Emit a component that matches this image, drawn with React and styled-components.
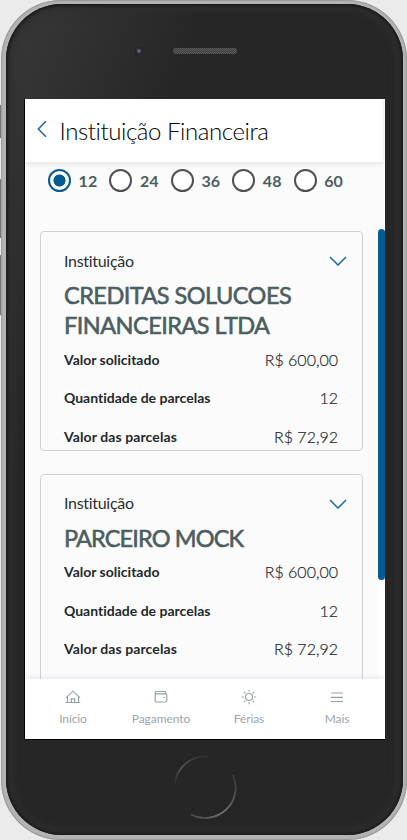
import React from "react";
import styled, { createGlobalStyle, css } from "styled-components";

const Global = createGlobalStyle`
  * { box-sizing: border-box; }
  body { margin: 0; background: #ebebeb; font-family: Lato, "Liberation Sans", sans-serif; font-variant-ligatures: none; }
  h1, h2, p, dl, dt, dd { margin: 0; font-weight: inherit; }
`;

const Stage = styled.div`
  position: relative;
  width: 407px;
  height: 840px;
  overflow: hidden;
  padding-left: 1px;
  background: #ebebeb;
`;

const SideButton = styled.i`
  position: absolute;
  left: 0;
  top: ${(p) => p.$top}px;
  width: 2px;
  height: ${(p) => p.$height}px;
  background: #777;
`;

const Phone = styled.div`
  position: relative;
  width: 406px;
  height: 840px;
  padding: 4px 4px 5px 5px;
  border-radius: 60px;
  background: #b3b3b3;
  box-shadow: inset 0 0 1px 1px #999;
`;

const Bezel = styled.div`
  width: 397px;
  height: 831px;
  border-radius: 56px;
  background: linear-gradient(112deg, #383838 0, #303030 90px, #262626 190px);
  box-shadow: inset 0 0 3px 2px #1b1b1b, inset 0 0 9px 6px #303030;
  display: flex;
  flex-direction: column;
`;

const Top = styled.div`
  height: 95px;
  flex: none;
  display: flex;
  align-items: center;
  padding: 0 0 1px 129px;
`;

const Camera = styled.i`
  width: 8px;
  height: 8px;
  border-radius: 50%;
  background: radial-gradient(circle, #66666e 0 1px, #3b3b44 2px, #1c1b23 4px);
`;

const Speaker = styled.i`
  width: 64px;
  height: 6px;
  margin-left: 30px;
  border-radius: 3px;
  background: repeating-conic-gradient(#5c5c5c 0 25%, #3c3c3c 0 50%) 0 0 / 2px 2px;
`;

const Screen = styled.main`
  width: 361px;
  height: 641px;
  flex: none;
  margin-left: 18px;
  border-left: 1px solid #000;
  border-bottom: 1px solid #000;
  background: #fbfbfb;
  display: flex;
  flex-direction: column;
  overflow: hidden;
`;

const Header = styled.header`
  position: relative;
  z-index: 1;
  height: 64px;
  flex: none;
  margin-right: 2px;
  padding-left: 12px;
  display: flex;
  align-items: center;
  background: #fff;
  border-bottom: 1px solid #eee;
  box-shadow: 0 1px 4px rgba(0, 0, 0, 0.1);
`;

const BackIcon = styled.svg`
  width: 10px;
  height: 18px;
  margin-bottom: 4px;
  fill: none;
  stroke: #17699f;
  stroke-width: 1.5;
`;

const Title = styled.h1`
  margin-left: 12.5px;
  font-size: 24px;
  line-height: 32px;
  font-weight: 300;
  letter-spacing: -0.42px;
  color: #000;
  white-space: nowrap;
`;

const Body = styled.div`
  flex: 1;
  min-height: 0;
  display: flex;
  overflow: hidden;
`;

const Content = styled.div`
  flex: 1;
  min-width: 0;
  padding-left: 15px;
`;

const Options = styled.div`
  display: flex;
  height: 68px;
  padding: 5px 0 0 8px;
`;

const Option = styled.label`
  width: 61.4px;
  height: 25px;
  display: flex;
  align-items: center;
  gap: 7.6px;
  font-size: 16px;
  font-weight: 700;
  letter-spacing: 0.1px;
  color: #4c5e61;
`;

const Radio = styled.i`
  width: 23px;
  height: 23px;
  flex: none;
  border-radius: 50%;
  border: 2px solid #505050;
  background: #fff;
  ${(p) =>
    p.$checked &&
    css`
      border-color: #045c92;
      background: radial-gradient(circle, #045c92 0 5.7px, #fff 6.4px);
    `}
`;

const Card = styled.section`
  width: 323px;
  height: ${(p) => p.$height}px;
  margin-bottom: 22.5px;
  padding: 16px 24px 0 23px;
  border: 1px solid #d2d2d2;
  border-radius: 4px;
`;

const CardTop = styled.div`
  height: 24px;
  display: flex;
  align-items: center;
  justify-content: space-between;
`;

const Caption = styled.p`
  font-size: 16px;
  letter-spacing: -0.3px;
  color: #2c3032;
`;

const Chevron = styled.svg`
  width: 18px;
  height: 10px;
  margin: 2px -8.5px 0 0;
  fill: none;
  stroke: #17699f;
  stroke-width: 1.5;
`;

const Name = styled.h2`
  margin: 8px -12px 0 0;
  font-size: 23.5px;
  line-height: 30px;
  font-weight: 400;
  letter-spacing: ${(p) => p.$spacing}px;
  color: #4c5e61;
  -webkit-text-stroke: 0.6px #4c5e61;
`;

const Rows = styled.dl``;

const Row = styled.div`
  height: 38.5px;
  display: flex;
  align-items: center;
  justify-content: space-between;
`;

const Label = styled.dt`
  font-size: 14px;
  font-weight: 700;
  letter-spacing: ${(p) => p.$spacing}px;
  color: #25292b;
`;

const Value = styled.dd`
  font-size: 16px;
  font-weight: 300;
  color: #25292b;
  -webkit-text-stroke: 0.2px #25292b;
`;

const Track = styled.div`
  width: 7px;
  flex: none;
  display: flex;
  flex-direction: column;
  padding-top: 66px;
`;

const Thumb = styled.div`
  height: 351px;
  flex: none;
  border-radius: 4px;
  background: #045c92;
`;

const TrackEnd = styled.div`
  flex: 1;
  background: #fff;
`;

const Nav = styled.nav`
  position: relative;
  height: 60px;
  flex: none;
  padding: 0 4px;
  display: grid;
  grid-template-columns: repeat(4, 1fr);
  background: #fff;
  box-shadow: 0 -1px 6px rgba(60, 70, 150, 0.12);
`;

const NavItem = styled.a`
  display: flex;
  flex-direction: column;
  align-items: center;
  padding-top: 10px;
  font-size: 12px;
  line-height: 16px;
  letter-spacing: ${(p) => p.$spacing}px;
  color: #9aa5a8;
  svg {
    width: 16px;
    height: 16px;
    margin-bottom: 6px;
    fill: none;
    stroke: #94a1a4;
    stroke-width: 1.15;
  }
`;

const Bottom = styled.div`
  flex: 1;
  display: flex;
  justify-content: center;
  padding-top: 15px;
`;

const HomeButton = styled.svg`
  width: 64px;
  height: 64px;
  fill: none;
  stroke-width: 1.7;
`;

const institutions = [
  {
    name: "CREDITAS SOLUCOES FINANCEIRAS LTDA",
    spacing: -0.53,
    height: 220,
  },
  {
    name: "PARCEIRO MOCK",
    spacing: -0.87,
    height: 230,
  },
];

const rows = [
  { label: "Valor solicitado", value: "R$ 600,00", spacing: 0 },
  { label: "Quantidade de parcelas", value: "12", spacing: 0 },
  { label: "Valor das parcelas", value: "R$ 72,92", spacing: 0.1 },
];

const HomeIcon = () => (
  <svg viewBox="0 0 16 16"><path d="M.8 13.5h14.4M2.5 13.5V7.5M13.5 13.5V7.5M1.2 8.7 8 2.2l6.8 6.5M6.3 13.5v-3.7h3.4v3.7" /></svg>
);
const WalletIcon = () => (
  <svg viewBox="0 0 16 16"><path d="M2.2 3.5v8.3q0 1.2 1.2 1.2h9.2q1.2 0 1.2-1.2V6q0-1.1-1.2-1.1H3.4Q2.2 4.8 2.2 3.6 2.3 2.5 3.5 2.5h8q1 0 1.2 1v1.2M10.3 8.5h1.6" /></svg>
);
const SunIcon = () => (
  <svg viewBox="0 0 16 16"><circle cx="8" cy="8" r="3.5" /><path d="M8 .8v2M8 13.2v2M.8 8h2M13.2 8h2M2.9 2.9l1.5 1.5M11.6 11.6l1.5 1.5M13.1 2.9l-1.5 1.5M4.4 11.6l-1.5 1.5" /></svg>
);
const MenuIcon = () => (
  <svg viewBox="0 0 16 16"><path d="M2 4h12M2 8.3h12M2 12.5h12" /></svg>
);

export default function App() {
  return (
    <Stage>
      <Global />
      <SideButton $top={105} $height={33} />
      <SideButton $top={179} $height={59} />
      <SideButton $top={255} $height={60} />
      <Phone>
        <Bezel>
          <Top><Camera /><Speaker /></Top>
          <Screen>
            <Header>
              <BackIcon viewBox="0 0 10 18"><path d="M9 1.3 1.3 9 9 16.7" /></BackIcon>
              <Title>Instituição Financeira</Title>
            </Header>
            <Body>
              <Content>
                <Options>
                  {["12", "24", "36", "48", "60"].map((n, i) => (
                    <Option key={n}><Radio $checked={i === 0} />{n}</Option>
                  ))}
                </Options>
                {institutions.map((item) => (
                  <Card key={item.name} $height={item.height}>
                    <CardTop>
                      <Caption>Instituição</Caption>
                      <Chevron viewBox="0 0 18 10"><path d="m1 1 8 8 8-8" /></Chevron>
                    </CardTop>
                    <Name $spacing={item.spacing}>{item.name}</Name>
                    <Rows>
                      {rows.map((row) => (
                        <Row key={row.label}>
                          <Label $spacing={row.spacing}>{row.label}</Label>
                          <Value>{row.value}</Value>
                        </Row>
                      ))}
                    </Rows>
                  </Card>
                ))}
              </Content>
              <Track><Thumb /><TrackEnd /></Track>
            </Body>
            <Nav>
              <NavItem $spacing={-0.1}><HomeIcon />Início</NavItem>
              <NavItem $spacing={-0.05}><WalletIcon />Pagamento</NavItem>
              <NavItem $spacing={-0.1}><SunIcon />Férias</NavItem>
              <NavItem $spacing={-0.1}><MenuIcon />Mais</NavItem>
            </Nav>
          </Screen>
          <Bottom>
            <HomeButton viewBox="0 0 64 64">
              <defs>
                <linearGradient id="arcTop" x1="0" y1="1" x2="1" y2="0">
                  <stop offset="0" stopColor="#262626" /><stop offset=".4" stopColor="#555" /><stop offset="1" stopColor="#2c2c2c" />
                </linearGradient>
                <linearGradient id="arcBottom" x1="1" y1="0" x2="0" y2="1">
                  <stop offset="0" stopColor="#363636" /><stop offset=".6" stopColor="#777" /><stop offset="1" stopColor="#444" />
                </linearGradient>
              </defs>
              <path stroke="url(#arcTop)" d="M1.6 32A30.5 30.5 0 0 1 36 1.8" />
              <path stroke="url(#arcBottom)" d="M60 20A30.5 30.5 0 0 1 18 59.5" />
            </HomeButton>
          </Bottom>
        </Bezel>
      </Phone>
    </Stage>
  );
}
